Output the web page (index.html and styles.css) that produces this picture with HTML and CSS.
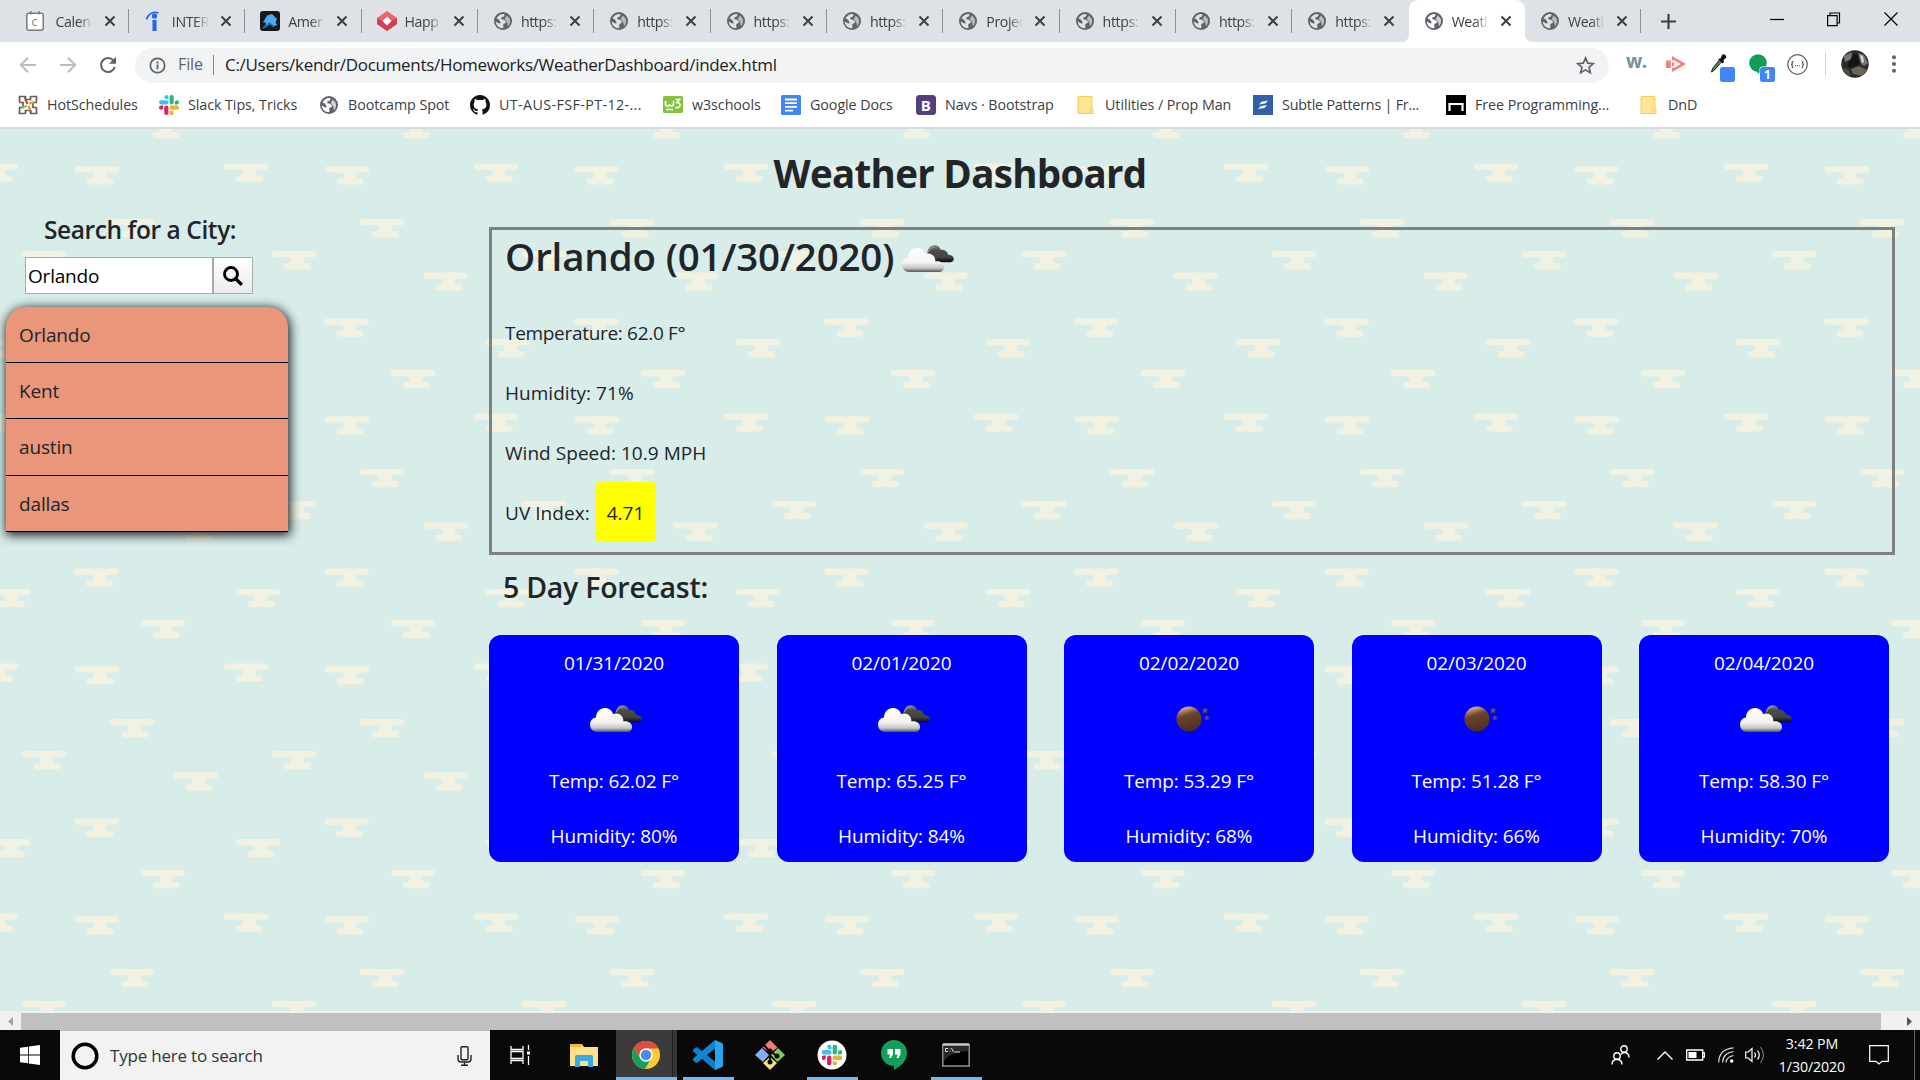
FILE: index.html
```html
<!DOCTYPE html>
<html lang="en">
<head>
<meta charset="utf-8">
<title>Weather Dashboard</title>
<link rel="stylesheet" href="styles.css">
</head>
<body>
<svg class="defs" aria-hidden="true">
  <defs>
    <linearGradient id="gWhite" x1="0" y1="0" x2="0" y2="1"><stop offset="0" stop-color="#fff"/><stop offset=".6" stop-color="#f3f3f3"/><stop offset=".84" stop-color="#c4c4c4"/><stop offset="1" stop-color="#555"/></linearGradient>
    <linearGradient id="gDark" x1="0" y1="0" x2="0" y2="1"><stop offset="0" stop-color="#888"/><stop offset=".3" stop-color="#4b4b4b"/><stop offset=".7" stop-color="#444"/><stop offset="1" stop-color="#080808"/></linearGradient>
    <linearGradient id="gMoon" x1=".2" y1="0" x2=".5" y2="1"><stop offset="0" stop-color="#e8cfc0"/><stop offset=".22" stop-color="#a87656"/><stop offset=".38" stop-color="#6b452c"/><stop offset="1" stop-color="#4c301c"/></linearGradient>
  </defs>
  <symbol id="globe" viewBox="0 0 18 18"><circle cx="9" cy="9" r="9" fill="#5f6368"/><path d="M10 1.900C10.800 2.800 10.600 4.200 9.300 4.800L7.300 5.500V7.300L10 7.800 12.300 10 11 11.300 9.300 12V16.200C4.800 16.300 1.800 13.200 1.800 9.500L5.200 11.500 6.800 11 5.500 8.600 4.500 7.200 2.500 6.600C3.600 3.600 6.500 1.800 10 1.900Z" fill="currentColor"/><path d="M12.800 3.500 15.600 6.500C16.500 9.500 16 12 14 14.500L13.600 12 12.800 9.400 10.800 7.600 11.200 6Z" fill="currentColor" opacity=".7"/></symbol>
  <symbol id="x" viewBox="0 0 12 12"><path d="M1.500 1.500l9 9m0-9l-9 9" stroke="#3c4043" stroke-width="2"/></symbol>
  <symbol id="folder" viewBox="0 0 17 18"><path d="M1 .5h14v11.500l1 1V17.500H1z" fill="#ffe493" stroke="#f4cd57"/><path d="M13 17.500v-4l2-1.500" fill="none" stroke="#f4cd57"/></symbol>
  <symbol id="slack" viewBox="0 0 24 24">
    <g fill="#36c5f0"><rect x="0" y="6.300" width="11.400" height="5" rx="2.500"/><path d="M8.900 0a2.500 2.500 0 0 1 2.500 2.500V5H8.900a2.500 2.500 0 0 1 0-5z"/></g>
    <g fill="#2eb67d"><rect x="12.700" y="0" width="5" height="11.300" rx="2.500"/><path d="M24 8.900a2.500 2.500 0 0 1-2.500 2.500H19V8.900a2.500 2.500 0 0 1 5 0z"/></g>
    <g fill="#ecb22e"><rect x="12.700" y="12.700" width="11.300" height="5" rx="2.500"/><path d="M15.200 24a2.500 2.500 0 0 1-2.500-2.500V19h2.500a2.500 2.500 0 0 1 0 5z"/></g>
    <g fill="#e01e5a"><rect x="6.300" y="12.700" width="5" height="11.300" rx="2.500"/><path d="M0 15.200a2.500 2.500 0 0 1 2.500-2.500H5v2.500a2.500 2.500 0 0 1-5 0z"/></g>
  </symbol>
  <symbol id="clouds" viewBox="0 0 52 27"><path d="M26 12C24 5 28 0 33 .3c4 .2 5 3 6 4.500 4-.5 6.500 2 7 5 4 0 6 2.500 5.800 4.500-.2 2-2 3-3.800 3H31z" fill="url(#gDark)"/><path d="M26.500 7Q28 2 33 2" fill="none" stroke="#999" stroke-width="1.200"/><path d="M7 27C3 27 0 23.500 0 19.500 0 15.500 3 12.500 6 12.500 6 7 10 3 15 3c4 0 7 2.500 8 6 6-2 10.500 2 10.500 7.500 5-.8 8.500 2 8.500 5.500s-2.500 5-5 5z" fill="url(#gWhite)"/></symbol>
  <symbol id="moon" viewBox="0 0 34 26"><circle cx="13" cy="13" r="12.500" fill="url(#gMoon)"/><path d="M29 1l1 2.500h2.500l-2 1.500.8 2.500L29 6l-2.300 1.500.8-2.500-2-1.500H28zM31 9l.9 2h2.100l-1.700 1.200.7 2.300-2-1.300-2 1.300.7-2.300L28 11h2.200z" fill="#74513e"/></symbol>
</svg>

<header class="chrome">
  <div class="tabs">
    <div class="tab first"><svg class="fav" viewBox="0 0 18 20"><rect x=".8" y="2.300" width="16.400" height="16.900" rx="2" fill="#fff" stroke="#777b82" stroke-width="1.500"/><path d="M5 0v3.500m8-3.500v3.500" stroke="#777b82" stroke-width="1.500"/><text x="5.500" y="15" class="calc">c</text></svg><span class="name">Calen</span><svg class="close"><use href="#x"/></svg></div>
    <div class="tab"><svg class="fav" viewBox="0 0 18 20"><circle cx="9.500" cy="5" r="2.600" fill="#2164f3"/><path d="M7.500 9h4v11h-4z" fill="#2164f3"/><path d="M1.500 8.500C2.500 3.500 7.500 0 13.500 2" fill="none" stroke="#2164f3" stroke-width="1.600"/></svg><span class="name">INTER</span><svg class="close"><use href="#x"/></svg></div>
    <div class="tab"><svg class="fav wide" viewBox="0 0 20 20"><rect width="20" height="20" rx="3" fill="#15191d"/><path d="M3 11.500l4-7L12 3l5 5-1.500 3.500 2 2.500-4 1-4-3.500L5 15l1-3.500z" fill="#46aeef"/><path d="M3 17l7-4.500 4 3.500" fill="none" stroke="#2179b8" stroke-width="1.500"/></svg><span class="name">Amer</span><svg class="close"><use href="#x"/></svg></div>
    <div class="tab"><svg class="fav wide" viewBox="0 0 20 20"><path d="M10 0l10 7v6l-10 7-10-7V7z" fill="#f2626c"/><path d="M0 7l5.500 3L10 15l4.500-5L20 7v6l-10 7-10-7z" fill="#cf4052"/><path d="M10 5.500l4.500 4.500-4.500 4.500L5.500 10z" fill="#fff"/></svg><span class="name">Happ</span><svg class="close"><use href="#x"/></svg></div>
    <div class="tab"><svg class="fav"><use href="#globe"/></svg><span class="name">https:</span><svg class="close"><use href="#x"/></svg></div>
    <div class="tab"><svg class="fav"><use href="#globe"/></svg><span class="name">https:</span><svg class="close"><use href="#x"/></svg></div>
    <div class="tab"><svg class="fav"><use href="#globe"/></svg><span class="name">https:</span><svg class="close"><use href="#x"/></svg></div>
    <div class="tab"><svg class="fav"><use href="#globe"/></svg><span class="name">https:</span><svg class="close"><use href="#x"/></svg></div>
    <div class="tab"><svg class="fav"><use href="#globe"/></svg><span class="name">Projec</span><svg class="close"><use href="#x"/></svg></div>
    <div class="tab"><svg class="fav"><use href="#globe"/></svg><span class="name">https:</span><svg class="close"><use href="#x"/></svg></div>
    <div class="tab"><svg class="fav"><use href="#globe"/></svg><span class="name">https:</span><svg class="close"><use href="#x"/></svg></div>
    <div class="tab nosep"><svg class="fav"><use href="#globe"/></svg><span class="name">https:</span><svg class="close"><use href="#x"/></svg></div>
    <div class="tab active nosep"><svg class="fav"><use href="#globe"/></svg><span class="name">Weatl</span><svg class="close"><use href="#x"/></svg></div>
    <div class="tab"><svg class="fav"><use href="#globe"/></svg><span class="name">Weatl</span><svg class="close"><use href="#x"/></svg></div>
    <svg class="plus" viewBox="0 0 16 16"><path d="M8 0v16M0 8h16" stroke="#3c4043" stroke-width="2.300"/></svg>
    <div class="winbtns">
      <svg viewBox="0 0 14 16"><path d="M0 8.500h14" stroke="#000" stroke-width="1.200"/></svg>
      <svg viewBox="0 0 14 16"><path d="M.6 4.600h9.500v10H.6zM3 4.500V2h9.500v10H10" fill="none" stroke="#000" stroke-width="1.200"/></svg>
      <svg viewBox="0 0 14 16"><path d="M.5 1.500l13 13m0-13l-13 13" stroke="#000" stroke-width="1.200"/></svg>
    </div>
  </div>
  <div class="toolbar">
    <svg class="nav" viewBox="0 0 18 18"><path d="M17 9H2M9 1.800L1.800 9 9 16.200" fill="none" stroke="#babcbe" stroke-width="2"/></svg>
    <svg class="nav" viewBox="0 0 18 18"><path d="M1 9h15M9 1.800L16.200 9 9 16.200" fill="none" stroke="#babcbe" stroke-width="2"/></svg>
    <svg class="nav" viewBox="0 0 18 18"><path d="M14.500 4.500A7 7 0 1 0 15.800 11" fill="none" stroke="#5f6368" stroke-width="2.100"/><path d="M17 .8v7h-7z" fill="#5f6368"/></svg>
    <div class="omni">
      <svg class="info" viewBox="0 0 18 18"><circle cx="9" cy="9" r="7.600" fill="none" stroke="#5f6368" stroke-width="1.800"/><path d="M9 8v5M9 4.800v2" stroke="#5f6368" stroke-width="2"/></svg>
      <span class="scheme">File</span><i class="bar"></i><span class="url">C:/Users/kendr/Documents/Homeworks/WeatherDashboard/index.html</span>
      <svg class="star" viewBox="0 0 20 20"><path d="M10 2l2.300 5.500 6 .5-4.600 3.900 1.400 5.800L10 14.600l-5.100 3.100 1.400-5.800L1.700 8l6-.5z" fill="none" stroke="#5f6368" stroke-width="1.700"/></svg>
    </div>
    <div class="ext">
      <b class="wdot">w.</b>
      <svg class="play" viewBox="0 0 20 16"><path d="M0 4.500h4.800v7.500H0z" fill="#f97c7c"/><path d="M6 0l14 8-14 8v-4.500l2.500.3L14.500 8l-6-3.800L6 4.500z" fill="#f97c7c"/><path d="M6 6.500h2v3.500H6z" fill="#f97c7c"/></svg>
      <svg class="drop" viewBox="0 0 25 28"><path d="M1.500 18l1-3.500 6.500-8 2 2-6.500 7.500z" fill="#3f9153" stroke="#222"/><path d="M8 5l4.500 4.500L14 7.500l-.5-1.500L16 4q.8-2.500-1.500-3.500T11.500 2L10.500 4.500z" fill="#111"/><rect x="10" y="13" width="15" height="15" rx="2.500" fill="#4285f4"/></svg>
      <svg class="hang" viewBox="0 0 26 28"><circle cx="9" cy="9" r="8.800" fill="#129e59"/><path d="M6 16h6l-2 4z" fill="#129e59"/><rect x="10.500" y="12.500" width="16" height="16" rx="3" fill="#fff"/><rect x="11" y="13" width="15" height="15" rx="2.500" fill="#4285f4"/><text x="15" y="25" class="badge">1</text></svg>
      <svg class="json" viewBox="0 0 20 20"><circle cx="10" cy="10" r="9.300" fill="none" stroke="#5f6368" stroke-width="1.200"/><path d="M6.200 7q-1.500 0-1.200 1.500T3.700 10q1.600 0 1.300 1.500T6.200 13M13.800 7q1.500 0 1.200 1.500t1.300 1.500q-1.600 0-1.300 1.500t-1.200 1.500M7.500 11h1m1 0h1m1 0h1" fill="none" stroke="#5f6368" stroke-width="1.200"/></svg>
      <i class="split"></i>
      <svg class="avatar" viewBox="0 0 28 28"><clipPath id="av"><circle cx="14" cy="14" r="13.700"/></clipPath><g clip-path="url(#av)"><path d="M0 0h28v28H0z" fill="#2b2a28"/><path d="M3 6l8-4-1 7-6 3zM17 3l6 2 4 8-4 3-3-2z" fill="#77786f"/><path d="M19 5l3 1 1 6-2 1z" fill="#d5d8d4"/><path d="M12 6q3-5 5 0l2 8-9 4-4-3z" fill="#141414"/><path d="M10 19l8-3 8 4-5 6-9-2z" fill="#6d6658"/><path d="M2 18l6 2 2 6-5-1z" fill="#4d4b45"/></g></svg>
      <svg class="dots" viewBox="0 0 6 18"><g fill="#5f6368"><circle cx="3" cy="2.300" r="2"/><circle cx="3" cy="9" r="2"/><circle cx="3" cy="15.700" r="2"/></g></svg>
    </div>
  </div>
  <nav class="marks">
    <a><svg viewBox="0 0 20 20"><path d="M1.500 7V1.500H7V4m6-2.500h5.500V7M18.500 13v5.500H13V16m-6 2.500H1.500V13M1 7.500h4v5H1m18-5h-4v5h4M7.500 1v3.500h5V1M7.500 19v-3.500h5V19" fill="none" stroke="#625e58" stroke-width="1.700"/><path d="M7.500 4.500l2 4.500" stroke="#e33b2f" stroke-width="2"/><path d="M11 8.500l5-1.500" stroke="#f6a01b" stroke-width="2"/><path d="M4 12.500l5-1.500" stroke="#8ac53f" stroke-width="2"/><path d="M10.500 11l2 4.500" stroke="#f0802c" stroke-width="2"/></svg><span>HotSchedules</span></a>
    <a><svg viewBox="0 0 24 24"><use href="#slack"/></svg><span>Slack Tips, Tricks</span></a>
    <a class="small"><svg><use href="#globe"/></svg><span>Bootcamp Spot</span></a>
    <a class="course"><svg viewBox="0 0 16 16"><path fill="#111" d="M8 0C3.580 0 0 3.580 0 8c0 3.540 2.290 6.530 5.470 7.590.4.070.55-.17.55-.38v-1.490c-2.010.37-2.530-.49-2.690-.94-.09-.23-.48-.94-.82-1.130-.28-.15-.68-.52-.01-.53.63-.01 1.080.58 1.230.82.72 1.210 1.870.87 2.330.66.070-.52.280-.87.510-1.070-1.780-.2-3.640-.89-3.640-3.950 0-.87.310-1.590.820-2.150-.08-.2-.36-1.020.080-2.120 0 0 .670-.21 2.200.82a7.600 7.600 0 0 1 4 0c1.530-1.040 2.200-.82 2.200-.82.440 1.100.160 1.920.080 2.120.510.560.820 1.270.820 2.150 0 3.070-1.870 3.750-3.650 3.950.290.250.540.730.540 1.480v2.190c0 .21.150.46.550.38A8 8 0 0 0 16 8c0-4.420-3.580-8-8-8z"/></svg><span>UT-AUS-FSF-PT-12-...</span></a>
    <a class="w3"><svg viewBox="0 0 20 17"><rect width="20" height="17" rx="1.500" fill="#84c341"/><path d="M2.500 5v3q0 2 2 2t2-2q0 2 2 2t2-2V5M12.500 3.500h4L14 6.500q3 0 3 2.800t-4.500 2.200M3 13.500h7" fill="none" stroke="#fff" stroke-width="1.600"/></svg><span>w3schools</span></a>
    <a><svg viewBox="0 0 20 20"><rect width="20" height="20" rx="1.500" fill="#4285f4"/><path d="M4 4.500h12M4 8.200h12M4 11.900h12M4 15.600h8" stroke="#fff" stroke-width="1.800"/></svg><span>Google Docs</span></a>
    <a><svg viewBox="0 0 20 20"><rect width="20" height="20" rx="3.500" fill="#563d7c"/><text x="4.700" y="15.500" class="boot">B</text></svg><span>Navs · Bootstrap</span></a>
    <a class="fold"><svg><use href="#folder"/></svg><span>Utilities / Prop Man</span></a>
    <a class="subtle"><svg viewBox="0 0 20 20"><rect width="20" height="20" fill="#335ea8"/><path d="M6 9.500l2.500-2.800L15 5.500l-2.500 3zM5 14l2.500-2.800L14 10l-2.500 3z" fill="#fff"/></svg><span>Subtle Patterns | Fr...</span></a>
    <a><svg viewBox="0 0 20 20"><rect width="20" height="20" fill="#000"/><path d="M3.500 16V9h13v7" fill="none" stroke="#fff" stroke-width="2.200"/></svg><span>Free Programming...</span></a>
    <a class="fold"><svg><use href="#folder"/></svg><span>DnD</span></a>
  </nav>
</header>

<div class="page">
  <h1>Weather Dashboard</h1>
  <div class="row">
    <aside>
      <h4>Search for a City:</h4>
      <div class="form"><div class="input">Orlando</div><div class="go"><svg viewBox="0 0 20 20"><circle cx="8" cy="8" r="6.500" fill="none" stroke="#000" stroke-width="2.900"/><path d="M12.500 12.500l6.300 6.300" stroke="#000" stroke-width="3.300"/></svg></div></div>
      <ul class="cities"><li>Orlando</li><li>Kent</li><li>austin</li><li>dallas</li></ul>
    </aside>
    <main>
      <section class="current">
        <h2><span>Orlando (01/30/2020)</span><svg class="wx"><use href="#clouds"/></svg></h2>
        <p class="temp">Temperature: 62.0 F°</p>
        <p>Humidity: 71%</p>
        <p>Wind Speed: 10.9 MPH</p>
        <p class="uvrow">UV Index: <span class="uv">4.71</span></p>
      </section>
      <h3>5 Day Forecast:</h3>
      <section class="days">
        <article><p>01/31/2020</p><svg class="wx"><use href="#clouds"/></svg><p>Temp: 62.02 F°</p><p>Humidity: 80%</p></article>
        <article><p>02/01/2020</p><svg class="wx"><use href="#clouds"/></svg><p>Temp: 65.25 F°</p><p>Humidity: 84%</p></article>
        <article><p>02/02/2020</p><svg class="wx moon"><use href="#moon"/></svg><p>Temp: 53.29 F°</p><p>Humidity: 68%</p></article>
        <article><p>02/03/2020</p><svg class="wx moon"><use href="#moon"/></svg><p>Temp: 51.28 F°</p><p>Humidity: 66%</p></article>
        <article><p>02/04/2020</p><svg class="wx"><use href="#clouds"/></svg><p>Temp: 58.30 F°</p><p>Humidity: 70%</p></article>
      </section>
    </main>
  </div>
</div>

<div class="hscroll">
  <svg viewBox="0 0 21 17"><path d="M13 4v9L8 8.500z" fill="#a3a3a3"/></svg>
  <div class="thumb"></div>
  <svg class="right" viewBox="0 0 39 17"><path d="M26 4v9l5-4.500z" fill="#505050"/></svg>
</div>

<footer class="taskbar">
  <div class="start"><svg viewBox="0 0 20 20"><path d="M0 2.800L8.200 1.700v7.800H0zM9 1.600L20 0v9.500H9zM0 10.400h8.200v7.900L0 17.200zM9 10.400h11V20L9 18.400z" fill="#fff"/></svg></div>
  <div class="find"><svg class="cortana" viewBox="0 0 28 28"><circle cx="14" cy="14" r="11.800" fill="none" stroke="#000" stroke-width="3.500"/></svg><span>Type here to search</span><svg class="mic" viewBox="0 0 15 20"><rect x="4" y=".7" width="7" height="13" rx="1" fill="none" stroke="#222" stroke-width="1.400"/><path d="M1 9v4q0 3 3 3h7q3 0 3-3V9M7.500 16v3M4 19.300h7" fill="none" stroke="#222" stroke-width="1.400"/></svg></div>
  <div class="apps">
    <div class="app"><svg width="20" height="20" viewBox="0 0 20 20"><path d="M1 1v3.500h12V1M1 19v-3.500h12V19M1 6.500h12v7H1zM18.500 0v5m0 6v9" fill="none" stroke="#fff" stroke-width="1.300"/><path d="M17 6.500h3v3h-3z" fill="#fff"/></svg></div>
    <div class="app files"><svg width="28" height="24" viewBox="0 0 28 24"><path d="M0 1h12l2 3h14v19H0z" fill="#ffe08a"/><path d="M0 1h12v3H0z" fill="#f5b92b"/><path d="M5 24V13.500q0-1.500 1.500-1.500h15q1.500 0 1.500 1.500V24h-5v-6h-8v6z" fill="#3aa8e2"/></svg></div>
    <div class="app chromeapp"><svg width="28" height="28" viewBox="0 0 28 28"><circle cx="14" cy="14" r="14" fill="#fbc934"/><path d="M1.900 7A14 14 0 0 0 13 28l6-10.500-5-3.500-6 2.500z" fill="#17a05d"/><path d="M14 7.500h12.500a14 14 0 0 0-24.600-.5l6 9z" fill="#dc4e41"/><circle cx="14" cy="14" r="6.700" fill="#fff"/><circle cx="14" cy="14" r="5.300" fill="#4c8bf5"/></svg></div>
    <div class="app open"><svg width="30" height="30" viewBox="0 0 30 30"><path d="M0 10.500q0-1 1-1.700L2.500 7.500q1-.5 2 0L22 21.500V30L.7 12z" fill="#0b7fc9"/><path d="M0 19.500q0 1 1 1.700l1.500 1.300q1 .5 2 0L22 8.500V0L.7 18z" fill="#0f86d2"/><path d="M22 0l7 3q1 .5 1 1.500v21q0 1-1 1.500l-7 3z" fill="#29a5f0"/></svg></div>
    <div class="app"><svg width="30" height="30" viewBox="0 0 30 30"><path d="M15 0l7.500 7.500L15 13 7.500 7.500z" fill="#f67a77"/><path d="M7 8l7 7-6 7-8-7z" fill="#82aefc"/><path d="M23 8l7 7-7.500 7L16 15z" fill="#84cc5c"/><path d="M15 17l7 6-7 7-7-7z" fill="#fee07f"/><path d="M9 5l6 7v10m0-11l7 5" fill="none" stroke="#090909" stroke-width="2"/><g fill="#090909"><circle cx="15" cy="11" r="2.500"/><circle cx="15" cy="22" r="2.500"/><circle cx="22" cy="16" r="2.500"/></g></svg></div>
    <div class="app open"><svg width="30" height="30" viewBox="0 0 30 30"><circle cx="15" cy="15" r="14.500" fill="#fff"/><svg x="4.500" y="4.500" width="21" height="21"><use href="#slack"/></svg></svg></div>
    <div class="app"><svg width="26" height="30" viewBox="0 0 26 30"><path d="M13 0a13 13 0 0 1 13 13c0 8-6 13-13 17v-4A13 13 0 0 1 13 0z" fill="#139e5a"/><path d="M6.500 9H12v5l-2 4H8l1.200-3.500H6.500zM14 9h5.500v5l-2 4h-2l1.200-3.500H14z" fill="#fff"/></svg></div>
    <div class="app open"><svg width="28" height="24" viewBox="0 0 28 24"><rect x=".8" y="1.500" width="26.400" height="21.500" fill="#000" stroke="#8a939b" stroke-width="1.500"/><path d="M1 1.500h26" stroke="#c8cdd4" stroke-width="2.400"/><path d="M2 3h24v5Q8 9 2 18z" fill="#292929"/><path d="M6 5.500H3.500v3H6M8 5.500v.8m0 1.400v.8M9.500 5l2 4M12.500 9H18" fill="none" stroke="#ddd"/></svg></div>
  </div>
  <div class="tray">
    <svg class="people" viewBox="0 0 19 20"><g fill="none" stroke="#fff" stroke-width="1.400"><circle cx="6" cy="11" r="3.200"/><path d="M1 19.500q0-5 5-5t5 5"/><circle cx="13" cy="4" r="3.200"/><path d="M10 9.500q1-2 3-2 5 0 5 5"/></g></svg>
    <svg class="chev" viewBox="0 0 16 9"><path d="M.5 8.500L8 1l7.500 7.500" fill="none" stroke="#fff" stroke-width="1.400"/></svg>
    <svg class="bat" viewBox="0 0 19 12"><path d="M.7 1h16v10H.7zM17 4h1.500v4H17" fill="none" stroke="#fff" stroke-width="1.300"/><path d="M2.500 3h8v6h-8z" fill="#fff"/></svg>
    <svg class="wifi" viewBox="0 0 16 16"><g fill="none" stroke="#ddd" stroke-width="1.200"><path d="M.7 15.500Q1 2 15.500.8"/><path d="M4.500 15.500Q5 6 15.500 4.500"/><path d="M8 15.500Q8.500 10 15.500 8.500"/></g><circle cx="13.700" cy="14" r="1.800" fill="#fff"/></svg>
    <svg class="vol" viewBox="0 0 20 18"><path d="M.7 6h2.500L7 2.500v13L3.200 12H.7z" fill="none" stroke="#fff" stroke-width="1.200"/><path d="M9.500 6.500q2 2.500 0 5M12.500 4.500q3.500 4.500 0 9" fill="none" stroke="#fff" stroke-width="1.200"/><path d="M15.500 1q6 8 0 16" fill="none" stroke="#777" stroke-width="1.200"/></svg>
    <div class="clock"><span>3:42 PM</span><span>1/30/2020</span></div>
    <svg class="note" viewBox="0 0 20 20"><path d="M.7.7h18.600v15.600H13l-3 2.700-3-2.700H.7z" fill="none" stroke="#fff" stroke-width="1.200"/></svg>
    <i class="peek"></i>
  </div>
</footer>
</body>
</html>
```

FILE: styles.css
```css
* { box-sizing: border-box; }
body { margin: 0; width: 1920px; height: 1080px; overflow: hidden; display: flex; flex-direction: column; font-family: "Open Sans", "Noto Sans", sans-serif; color: #212529; }
h1, h2, h3, h4, p, ul { margin: 0; padding: 0; font-weight: 400; }
svg { flex: none; display: block; }
.defs { width: 0; height: 0; position: absolute; }

/* browser window */
.chrome { height: 129px; flex: none; background: #fff; border-bottom: 2px solid #d8dcdf; }
.tabs { height: 42px; display: flex; align-items: center; background: #dee1e6; padding-left: 12.500px; }
.tab { width: 116.350px; height: 42px; flex: none; display: flex; align-items: center; padding-left: 16px; position: relative; }
.tab.first { padding-left: 13.500px; }
.tab.first .name { margin-left: 11.500px; }
.tab:not(.nosep)::after { content: ""; position: absolute; right: 0; top: 9px; width: 1px; height: 24px; background: #8d9095; }
.tab.active { background: #fff; border-radius: 9px 9px 0 0; }
.tab.active::before, .tab.active::after { content: ""; position: absolute; bottom: 0; width: 8px; height: 8px; }
.tab.active::before { left: -8px; background: radial-gradient(circle at 0 0, transparent 8px, #fff 8.500px); }
.tab.active::after { right: -8px; background: radial-gradient(circle at 100% 0, transparent 8px, #fff 8.500px); }
.fav { width: 18px; height: 18px; color: #dee1e6; }
.active .fav { color: #fff; }
.fav[viewBox] { height: 20px; }
.fav.wide { width: 20px; margin: 0 -1px 0 -1px; }
.calc { font: 12px "Open Sans", sans-serif; fill: #777b82; }
.name { width: 38px; margin-left: 9px; overflow: hidden; white-space: nowrap; font-size: 14.200px; letter-spacing: -.4px; color: #3c4043; -webkit-mask-image: linear-gradient(90deg, #000 60%, transparent 98%); mask-image: linear-gradient(90deg, #000 60%, transparent 98%); }
.close { width: 12px; height: 12px; margin-left: 10px; }
.plus { width: 15px; height: 15px; margin-left: 20px; }
.winbtns { margin-left: auto; display: flex; gap: 43px; padding: 0 22px 4px 0; }
.winbtns svg { width: 14px; height: 16px; }

.toolbar { height: 44px; display: flex; align-items: center; padding-left: 19px; }
.nav { width: 18px; height: 18px; margin: 2px 22px 0 0; }
.omni { width: 1474px; height: 35px; margin: 2px 0 0 -4px; border-radius: 18px; background: #f1f3f4; display: flex; align-items: center; padding: 0 14px 0 14px; font-size: 16px; white-space: nowrap; flex: none; }
.info { width: 17px; height: 17px; }
.scheme { margin: 0 0 2px 12px; color: #5f6368; width: 35px; letter-spacing: -.1px; }
.bar { width: 1px; height: 20px; background: #80868b; margin-right: 11px; }
.url { color: #202124; font-size: 17px; letter-spacing: -.3px; padding-bottom: 2px; }
.star { width: 19px; height: 19px; margin-left: auto; }
.ext { flex: 1; display: flex; align-items: center; padding-left: 17px; }
.wdot { width: 40px; font-size: 19px; line-height: 20px; margin-top: -6px; color: #7391a0; letter-spacing: -.5px; }
.play { width: 20px; height: 16px; margin-right: 24px; }
.drop { width: 25px; height: 28px; margin: 8px 14px 0 0; }
.hang { width: 26px; height: 28px; margin: 8px 12px 0 0; }
.json { width: 21px; height: 21px; }
.badge { font: 700 12px "Open Sans", sans-serif; fill: #fff; }
.split { width: 1px; height: 24px; background: #d0d3d6; margin: 0 15px 0 17px; }
.avatar { width: 28px; height: 28px; margin-right: 22px; }
.dots { width: 6px; height: 18px; }

.marks { height: 41px; display: grid; grid-template-columns: 141px 160px 151px 193px 118px 135px 161px 176px 193px 194px 100px; padding-left: 18px; align-items: center; }
.marks a { display: flex; align-items: center; gap: 9px; font-size: 14.300px; letter-spacing: -.07px; color: #3c4043; white-space: nowrap; padding-bottom: 4px; }
.marks svg { width: 20px; height: 20px; color: #fff; }
.marks span { padding-bottom: 1px; }
.marks .small svg { width: 18px; height: 18px; margin: 0 1px 0 1px; }
.marks .course { letter-spacing: .38px; }
.marks .w3 svg { height: 17px; }
.marks .subtle { letter-spacing: -.2px; }
.marks .fold svg { width: 17px; height: 18px; margin-right: 2px; }
.boot { font: 700 15px "Open Sans", sans-serif; fill: #fff; }

/* dashboard page */
.page { height: 882px; flex: none; overflow: hidden; background: #d8ecea url("data:image/svg+xml,%3Csvg xmlns='http://www.w3.org/2000/svg' xmlns:xlink='http://www.w3.org/1999/xlink' width='250' height='250'%3E%3Cdefs%3E%3Cpath id='c' fill='%23f1f2e2' d='M3 0H41a3 3 0 0 1 0 6.300H34a2.850 2.850 0 0 0 0 5.700H35.600a3 3 0 0 1 0 6.300H15a3 3 0 0 1 0-6.300H16a2.850 2.850 0 0 0 0-5.700H3a3 3 0 0 1 0-6.300z'/%3E%3C/defs%3E%3Cuse xlink:href='%23c' x='224' y='34.500'/%3E%3Cuse xlink:href='%23c' x='-26' y='34.500'/%3E%3Cuse xlink:href='%23c' x='75' y='37.300'/%3E%3Cuse xlink:href='%23c' x='110' y='90'/%3E%3Cuse xlink:href='%23c' x='22' y='122'/%3E%3Cuse xlink:href='%23c' x='173.700' y='143.500'/%3E%3Cuse xlink:href='%23c' x='74.500' y='189.500'/%3E%3Cuse xlink:href='%23c' x='236' y='210'/%3E%3Cuse xlink:href='%23c' x='-14' y='210'/%3E%3Cuse xlink:href='%23c' x='141' y='241'/%3E%3Cuse xlink:href='%23c' x='141' y='-9'/%3E%3C/svg%3E") 0 0 / 250px 250px; }
h1 { height: 88px; line-height: 88px; text-align: center; font-size: 38.500px; font-weight: 700; letter-spacing: -.7px; }
.row { display: flex; }
aside { width: 489px; flex: none; }
h4 { padding-left: 44px; line-height: 26px; font-size: 24.500px; font-weight: 600; letter-spacing: -.42px; }
.form { display: flex; margin: 14px 0 0 25px; height: 37px; }
.input { width: 188px; border: 1px solid #a9a9a9; background: #fff; color: #000; font-size: 19px; line-height: 36px; padding-left: 2px; letter-spacing: -.2px; }
.go { width: 40px; border: 1px solid #a9a9a9; background: linear-gradient(#fff, #ececec); display: flex; align-items: center; justify-content: center; }
.go svg { width: 20px; height: 20px; }
.cities { width: 282px; margin: 13px 0 0 6px; list-style: none; background: #e9967a; border-radius: 20px 20px 0 0; box-shadow: 1px 2px 11px 1px #101818; }
.cities li { height: 56.200px; line-height: 56px; padding-left: 13px; border-bottom: 1px solid #000; font-size: 19px; letter-spacing: -.15px; }
main { width: 1406px; margin-top: 10px; }
.current { height: 328px; border: 3px solid gray; padding-left: 13px; }
.current p { height: 60px; line-height: 60px; font-size: 19px; letter-spacing: .04px; }
.current .temp { letter-spacing: -.31px; }
h2 { display: flex; align-items: center; height: 52px; margin-bottom: 21px; font-size: 38.500px; font-weight: 600; letter-spacing: -.16px; white-space: nowrap; }
.wx { width: 52px; height: 27px; }
h2 .wx { margin: 5px 0 0 8px; }
.current .uvrow { display: flex; gap: 5px; }
.uv { background: #ff0; border-radius: 5px; padding: 0 12px; width: 61px; height: 60px; margin-top: -1px; line-height: 62px; }
h3 { padding: 1px 0 0 14px; line-height: 63px; font-size: 28.500px; font-weight: 600; letter-spacing: -.25px; margin-bottom: 16px; }
.days { display: flex; gap: 37.500px; }
.days article { width: 250px; height: 227px; flex: none; padding-top: 1px; background: #00f; color: #fff; border-radius: 12px; text-align: center; font-size: 19px; letter-spacing: -.1px; line-height: 55px; }
.days .wx { margin: 14px 0 22px 101px; }
.days .moon { width: 34px; height: 26px; margin: 15px 0 22px 112px; }

.hscroll { height: 19px; flex: none; display: flex; background: #f1f1f1; padding-top: 2px; }
.hscroll svg { width: 21px; height: 17px; }
.hscroll .right { width: 39px; }
.thumb { flex: 1; background: #c1c1c1; }

/* desktop taskbar */
.taskbar { height: 50px; flex: none; background: #090909; display: flex; color: #fff; }
.start { width: 60px; display: flex; align-items: center; justify-content: center; }
.start svg { width: 20px; height: 20px; }
.find { width: 430px; background: #f2f2f2; border-top: 1px solid #bbb; display: flex; align-items: center; padding: 0 18px 0 11px; color: #333; font-size: 17px; letter-spacing: -.2px; }
.cortana { width: 28px; height: 28px; margin-right: 11px; }
.mic { width: 15px; height: 20px; margin-left: auto; }
.apps { display: flex; }
.app { width: 62px; display: flex; align-items: center; justify-content: center; position: relative; }
.app:first-child { width: 59px; }
.app.files { width: 67px; padding-left: 3px; }
.chromeapp { width: 61px; background: linear-gradient(90deg, #3b3b3b 56px, #1d1d1d 56px, #1d1d1d 57px, #353535 57px); border-bottom: 3px solid #76b9ed; padding: 3px 2px 0 0; }
.chromeapp + .app { width: 62px; }
.app.open::after { content: ""; position: absolute; bottom: 0; left: 6px; width: 51px; height: 3px; background: #76b9ed; }
.tray { margin-left: auto; display: flex; align-items: center; }
.people { width: 19px; height: 20px; margin-right: 27px; }
.chev { width: 16px; height: 9px; margin-right: 13px; }
.bat { width: 19px; height: 12px; margin-right: 13px; }
.wifi { width: 16px; height: 16px; margin-right: 11px; }
.vol { width: 20px; height: 18px; margin-right: 12px; }
.clock { width: 70px; display: flex; flex-direction: column; align-items: center; font-size: 14.200px; line-height: 23px; letter-spacing: -.1px; margin-right: 22px; white-space: nowrap; }
.note { width: 20px; height: 20px; margin-right: 25px; }
.peek { width: 6px; height: 50px; border-left: 1px solid #666; }
```
